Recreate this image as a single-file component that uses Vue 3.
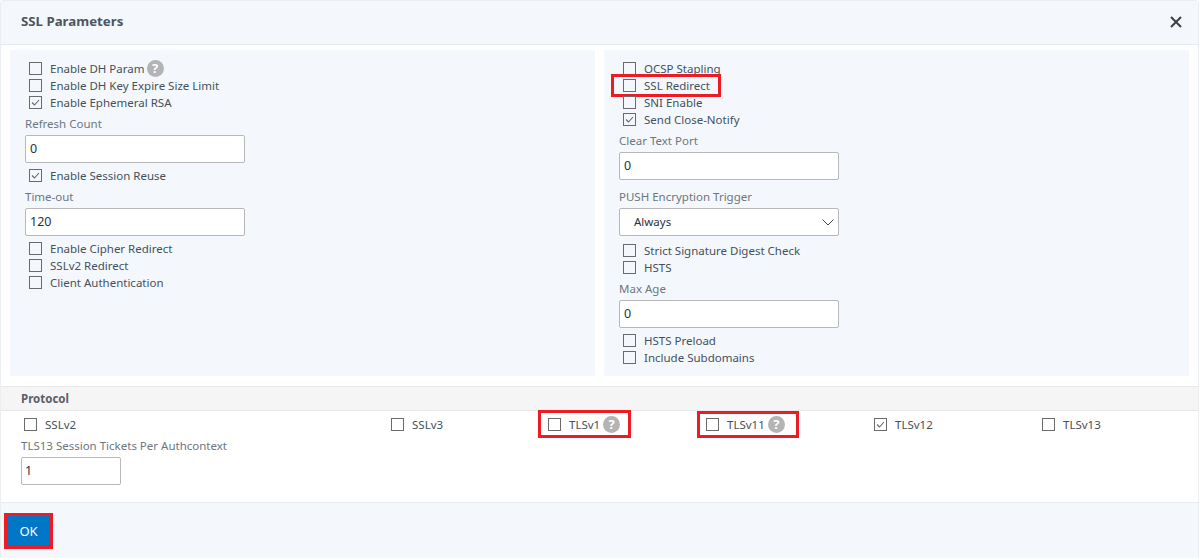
<script setup>
const leftTop = [
  { label: 'Enable DH Param', help: true },
  { label: 'Enable DH Key Expire Size Limit' },
  { label: 'Enable Ephemeral RSA', on: true },
]
const leftBottom = [
  { label: 'Enable Cipher Redirect' },
  { label: 'SSLv2 Redirect' },
  { label: 'Client Authentication' },
]
const protocols = [
  { label: 'SSLv2' },
  { label: 'SSLv3' },
  { label: 'TLSv1', help: true, mark: 'mark-a' },
  { label: 'TLSv11', help: true, mark: 'mark-b' },
  { label: 'TLSv12', on: true },
  { label: 'TLSv13' },
]
</script>

<template>
  <div class="modal">
    <header class="head">
      <h1>SSL Parameters</h1>
      <svg class="close" width="12" height="12" viewBox="0 0 12 12"><path d="M1 1l10 10M11 1L1 11" stroke="#3c3f44" stroke-width="2" fill="none"/></svg>
    </header>

    <div class="panels">
      <section class="panel">
        <div class="checks">
          <label v-for="c in leftTop" :key="c.label" class="check">
            <span class="box"><svg v-if="c.on" width="11" height="11" viewBox="0 0 11 11"><path d="M2 5.5l2.5 2.5L9 3" stroke="#666" stroke-width="1.1" fill="none"/></svg></span>
            <span>{{ c.label }}</span>
            <span v-if="c.help" class="help help-tight">?</span>
          </label>
        </div>
        <div class="field"><span class="lab">Refresh Count</span><div class="input">0</div></div>
        <div class="checks">
          <label class="check"><span class="box"><svg width="11" height="11" viewBox="0 0 11 11"><path d="M2 5.5l2.5 2.5L9 3" stroke="#666" stroke-width="1.1" fill="none"/></svg></span><span>Enable Session Reuse</span></label>
        </div>
        <div class="field"><span class="lab">Time-out</span><div class="input">120</div></div>
        <div class="checks">
          <label v-for="c in leftBottom" :key="c.label" class="check"><span class="box"></span><span>{{ c.label }}</span></label>
        </div>
      </section>

      <section class="panel">
        <div class="checks">
          <label class="check"><span class="box"></span><span>OCSP Stapling</span></label>
          <label class="check"><span class="box"></span><span>SSL Redirect</span><span class="mark mark-ssl"></span></label>
          <label class="check"><span class="box"></span><span>SNI Enable</span></label>
          <label class="check"><span class="box"><svg width="11" height="11" viewBox="0 0 11 11"><path d="M2 5.5l2.5 2.5L9 3" stroke="#666" stroke-width="1.1" fill="none"/></svg></span><span>Send Close-Notify</span></label>
        </div>
        <div class="field"><span class="lab">Clear Text Port</span><div class="input">0</div></div>
        <div class="field">
          <span class="lab">PUSH Encryption Trigger</span>
          <div class="input select">Always
            <svg width="12" height="7" viewBox="0 0 12 7"><path d="M.5.5L6 6l5.5-5.5" stroke="#444" stroke-width="1" fill="none"/></svg>
          </div>
        </div>
        <div class="checks">
          <label class="check"><span class="box"></span><span>Strict Signature Digest Check</span></label>
          <label class="check"><span class="box"></span><span>HSTS</span></label>
        </div>
        <div class="field"><span class="lab">Max Age</span><div class="input">0</div></div>
        <div class="checks">
          <label class="check"><span class="box"></span><span>HSTS Preload</span></label>
          <label class="check"><span class="box"></span><span>Include Subdomains</span></label>
        </div>
      </section>
    </div>

    <div class="proto-head">Protocol</div>
    <div class="proto">
      <div class="proto-row">
        <label v-for="p in protocols" :key="p.label" class="check">
          <span class="box"><svg v-if="p.on" width="11" height="11" viewBox="0 0 11 11"><path d="M2 5.5l2.5 2.5L9 3" stroke="#666" stroke-width="1.1" fill="none"/></svg></span>
          <span>{{ p.label }}</span>
          <span v-if="p.help" class="help">?</span>
          <span v-if="p.mark" class="mark" :class="p.mark"></span>
        </label>
      </div>
      <div class="field tickets">
        <span class="lab">TLS13 Session Tickets Per Authcontext</span>
        <div class="input small">1</div>
      </div>
    </div>

    <footer class="foot">
      <button class="ok">OK</button>
    </footer>
  </div>
</template>

<style>
html, body { margin: 0; background: #fff; }
</style>

<style scoped>
.modal {
  width: 1199px;
  height: 558px;
  box-sizing: border-box;
  border: 1px solid #eceff1;
  border-bottom: 0;
  border-radius: 4px 4px 0 0;
  font-family: "Noto Sans", "Open Sans", sans-serif;
  font-size: 11.5px;
  color: #44505c;
  display: flex;
  flex-direction: column;
  background: #fff;
}
.head {
  height: 44px;
  flex: none;
  box-sizing: border-box;
  background: #f4f8fc;
  border-bottom: 1px solid #e6ebef;
  display: flex;
  align-items: center;
  justify-content: space-between;
  padding: 0 16px 2px 20px;
}
.head h1 {
  margin: 0 0 2px;
  font-size: 13.25px;
  font-weight: 700;
  color: #4c5560;
}
.panels {
  flex: none;
  display: flex;
  gap: 9px;
  padding: 5px 9px 0;
  height: 332px;
  box-sizing: border-box;
}
.panel {
  width: 585px;
  height: 326px;
  box-sizing: border-box;
  background: #f4f8fc;
  padding: 10px 15px 0;
}
.checks { display: flex; flex-direction: column; padding-left: 4px; }
.check {
  position: relative;
  display: flex;
  align-items: center;
  height: 17px;
  line-height: 17px;
  white-space: nowrap;
}
.box {
  width: 13px;
  height: 13px;
  flex: none;
  box-sizing: border-box;
  border: 1px solid #6b6b6b;
  background: transparent;
  margin-right: 8px;
  display: flex;
  align-items: center;
  justify-content: center;
}
.help {
  width: 17px;
  height: 17px;
  margin-left: 3px;
  border-radius: 50%;
  background: #b4b4b4;
  color: #fff;
  font-size: 13px;
  font-weight: 700;
  line-height: 17px;
  text-align: center;
}
.help-tight { margin-left: 2px; }
.field { display: flex; flex-direction: column; padding-top: 4px; }
.lab { height: 17px; line-height: 17px; margin-bottom: 3px; color: #6c7680; }
.input {
  width: 220px;
  height: 28px;
  box-sizing: border-box;
  border: 1px solid #b8b8b8;
  border-radius: 2px;
  background: #fff;
  padding: 0 4px;
  line-height: 26px;
  font-size: 12.5px;
  color: #27333e;
  margin-bottom: 4px;
}
.select {
  display: flex;
  align-items: center;
  justify-content: space-between;
  padding: 0 4px 0 14px;
  font-size: 11.5px;
  margin-bottom: 6px;
}
.small { width: 100px; padding: 0 3px; }
.mark {
  position: absolute;
  border: 3px solid #ed1c24;
  box-sizing: border-box;
  pointer-events: none;
}
.mark-ssl { left: -12px; top: -3px; width: 110px; height: 23px; }
.mark-a { left: -10px; top: -6px; width: 93px; height: 28px; }
.mark-b { left: -9px; top: -5px; width: 102px; height: 27px; }
.proto-head {
  flex: none;
  height: 25px;
  box-sizing: border-box;
  margin-top: 9px;
  background: #f5f5f5;
  border-top: 1px solid #e8e8e8;
  border-bottom: 1px solid #e8e8e8;
  padding-left: 20px;
  line-height: 23px;
  font-weight: 700;
  color: #5a6068;
}
.proto { flex: 1; padding: 5px 0 0 20px; }
.proto-row {
  display: grid;
  grid-template-columns: 367px 157px 158px 168px 168px 1fr;
  padding-left: 3px;
  height: 17px;
}
.proto-row .check { justify-self: start; }
.foot {
  flex: none;
  height: 56px;
  box-sizing: border-box;
  background: #f4f8fc;
  border-top: 1px solid #e6ebef;
  padding: 13px 0 0 6px;
}
.ok {
  display: block;
  width: 43px;
  height: 30px;
  padding: 0;
  background: #0076c6;
  border: 0;
  outline: 3px solid #ed1c24;
  color: #fff;
  font-family: inherit;
  font-size: 13px;
}
</style>
